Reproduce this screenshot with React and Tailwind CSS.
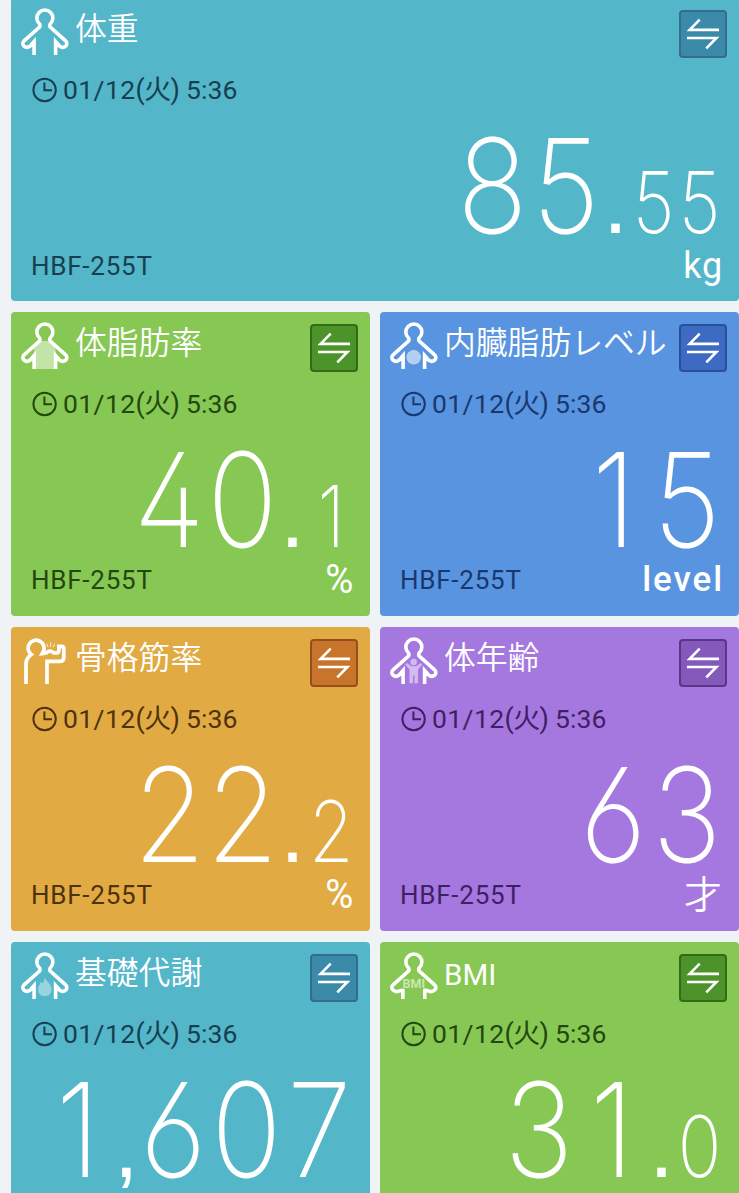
const themes = {
  teal: { card: "bg-[#54b6c9]", ink: "text-[#173f50]", button: "bg-[#3c8aaa] border-[#336c8c]" },
  green: { card: "bg-[#86c853]", ink: "text-[#24470f]", button: "bg-[#4c9429] border-[#346b18]" },
  blue: { card: "bg-[#5894df]", ink: "text-[#1a386f]", button: "bg-[#3d6bc4] border-[#29509a]" },
  orange: { card: "bg-[#e2aa42]", ink: "text-[#4d330d]", button: "bg-[#c8742b] border-[#964f1c]" },
  purple: { card: "bg-[#a578df]", ink: "text-[#3e2065]", button: "bg-[#8459bc] border-[#5b3486]" },
};

const cards = [
  { title: "体重", icon: "body", theme: "teal", whole: "85", decimal: "55", unit: "kg", wide: true },
  { title: "体脂肪率", icon: "fat", theme: "green", whole: "40", decimal: "1", unit: "%" },
  { title: "内臓脂肪レベル", icon: "visceral", theme: "blue", whole: "15", unit: "level" },
  { title: "骨格筋率", icon: "muscle", theme: "orange", whole: "22", decimal: "2", unit: "%" },
  { title: "体年齢", icon: "age", theme: "purple", whole: "63", unit: "才" },
  { title: "基礎代謝", icon: "flame", theme: "teal", whole: "1,607" },
  { title: "BMI", icon: "bmi", theme: "green", whole: "31", decimal: "0" },
];

const unitStyles = {
  kg: "text-[36px] font-[450] tracking-[0.8px] -mr-[1px]",
  level: "text-[35px] font-[480] tracking-[1.9px] -mr-[2px]",
  "%": "text-[40px] scale-x-[0.96] origin-right",
  才: "text-[38px] font-[350]",
};

function Inner({ kind }) {
  if (kind === "fat")
    return <path d="M19 19 L28.7 19 L34.5 25.5 L34.5 47 L13.2 47 L13.2 25.5 Z" fill="white" fillOpacity="0.5" />;
  if (kind === "visceral") return <circle cx="23.7" cy="35.3" r="7.3" fill="white" fillOpacity="0.55" />;
  if (kind === "age")
    return (
      <g fill="white" fillOpacity="0.5">
        <circle cx="23.7" cy="25" r="3.2" />
        <path d="M15.2 27.5 L16.8 26 L21.5 29.3 H26 L30.7 26 L32.2 27.5 L28 32.5 V46.3 H24.5 V38.5 H23 V46.3 H19.5 V32.5 Z" />
      </g>
    );
  if (kind === "flame")
    return (
      <path
        d="M23.8 25 C24.8 29.5 30.6 31.5 30.6 37.5 C30.6 41.5 27.8 44.2 23.8 44.2 C19.8 44.2 17 41.5 17 37.5 C17 34 19 33 19.3 30 L21.3 31.3 C22.8 30 23.4 28 23.8 25 Z"
        fill="white"
        fillOpacity="0.4"
      />
    );
  return null;
}

function PersonIcon({ kind }) {
  if (kind === "muscle")
    return (
      <svg viewBox="0 0 48 48" className="size-12 shrink-0" fill="none" stroke="white" strokeWidth="3.7">
        <path d="M5 47 V27 Q5 21.5 10.3 17.6 A8 8 0 1 1 22.4 14.4 L21.2 16.6 Q24 16.3 25.4 15.8 Q29 12.5 32.6 15.8 H35.6 Q37.9 15.8 37.9 13.5 V9.4 H40.4 Q42.8 9.4 42.8 12 V20.5 Q42.8 24.4 38.8 24.4 H26 V47" />
        <path d="M25.7 6.5 L27.1 10.3 M29.6 5.2 V9.8 M33.7 6.5 L32 10.3" strokeWidth="1" strokeOpacity="0.8" />
      </svg>
    );
  return (
    <svg viewBox="0 0 48 48" className="size-12 shrink-0 overflow-visible" fill="none">
      <Inner kind={kind} />
      <path
        d={
          kind === "bmi"
            ? "M12.9 47 V38 L9.2 39 C4.6 41.2 -0.6 36.3 3.1 32.8 L18.7 18.8 Q19.3 17.6 18.6 16 A8 8 0 1 1 29.1 16 Q28.4 17.6 29 18.8 L44.6 32.8 C48.3 36.3 43.1 41.2 38.5 39 L34.8 38 V47"
            : "M13.1 47 V33.5 L9.2 38 C4.6 41.6 -0.6 36.3 3.1 32.8 L18.7 18.8 Q19.3 17.6 18.6 16 A8 8 0 1 1 29.1 16 Q28.4 17.6 29 18.8 L44.6 32.8 C48.3 36.3 43.1 41.6 38.5 38 L34.6 33.5 V47"
        }
        stroke="white"
        strokeWidth="3.6"
      />
      {kind === "bmi" && (
        <text
          x="23.8"
          y="36"
          textAnchor="middle"
          fontSize="13"
          fontWeight="700"
          fill="#c9e7b1"
          stroke="#86c853"
          strokeWidth="1.4"
          paintOrder="stroke"
          textLength="22.5"
          lengthAdjust="spacingAndGlyphs"
          className="font-['Roboto',sans-serif]"
        >
          BMI
        </text>
      )}
    </svg>
  );
}

function SwapButton({ color }) {
  return (
    <button aria-label="swap" className={`size-12 shrink-0 rounded-[4px] border-2 ${color}`}>
      <svg viewBox="2 2 44 44" className="size-11" fill="none" stroke="white" strokeWidth="2.6">
        <path d="M20.7 9.7 L10.6 19.9 H40 M8 28 H37.4 L27.3 38.3" />
      </svg>
    </button>
  );
}

function Digits({ value }) {
  return [...value].map((c, i) =>
    c === "," ? (
      <span key={i} className="w-[23px] text-center font-['Liberation_Sans',sans-serif] text-[88px]">
        ,
      </span>
    ) : (
      <span key={i} className="flex w-[73px] justify-center">
        <span className="scale-x-[0.89] text-[131px] font-[200]">{c}</span>
      </span>
    )
  );
}

function Card({ title, icon, theme, whole, decimal, unit, wide }) {
  const t = themes[theme];
  return (
    <section className={`flex h-[303.67px] flex-col overflow-hidden rounded-[4px] ${t.card} ${wide ? "col-span-2" : ""}`}>
      <header className="flex h-[60px] pt-[10px] pr-3 pl-[10px]">
        <PersonIcon kind={icon} />
        <h2
          className={`ml-[6px] flex-1 whitespace-nowrap text-white ${
            icon === "bmi" ? "pt-[3px] text-[29.5px] leading-[40px] font-normal" : "pt-[1px] text-[31.8px] leading-[40px] font-[350]"
          }`}
        >
          {title}
        </h2>
        <div className="pt-[2px]">
          <SwapButton color={t.button} />
        </div>
      </header>
      <div className={`flex h-16 items-center pl-[21px] ${t.ink}`}>
        <svg viewBox="0 0 26 26" className="size-[26px]" fill="none" stroke="currentColor" strokeWidth="2">
          <circle cx="12.6" cy="13" r="11.2" />
          <path d="M12.4 5.5 V13.3 H20" />
        </svg>
        <time className="ml-[5px] text-[26.5px] leading-8 font-[450] tracking-[0.4px] whitespace-pre">
          01/12<span className="text-[27px] font-normal tracking-[-0.6px]">(火)</span>
          <span className="tracking-[0.1px]"> 5:36</span>
        </time>
      </div>
      <div
        className={`flex h-[120px] items-baseline justify-end pt-[4px] font-['Inter',sans-serif] leading-[120px] text-white [font-feature-settings:'cv02','cv03','cv04'] ${
          whole.includes(",") ? "pr-[14px]" : "pr-4"
        }`}
      >
        <Digits value={whole} />
        {decimal && (
          <>
            <span className="w-[29px] pr-[2px] text-center font-['Liberation_Sans',sans-serif] text-[88px]">.</span>
            {[...decimal].map((c, i) => (
              <span key={i} className="flex w-[46px] justify-center">
                <span className="scale-x-[0.85] text-[85px] font-[200]">{c}</span>
              </span>
            ))}
          </>
        )}
      </div>
      <footer className="flex items-center justify-between pt-[1px] pr-[17px] pl-5 leading-[46px]">
        <span className={`text-[26px] font-[450] tracking-[0.75px] ${t.ink}`}>HBF-255T</span>
        {unit && <span className={`text-white ${unitStyles[unit]}`}>{unit}</span>}
      </footer>
    </section>
  );
}

export default function App() {
  return (
    <main className="h-[1193px] overflow-hidden bg-[#eff3f6] pl-[11px] font-['Roboto','Noto_Sans_CJK_JP',sans-serif]">
      <div className="-mt-[2.3px] grid grid-cols-2 gap-x-[10px] gap-y-[11px]">
        {cards.map((c) => (
          <Card key={c.title} {...c} />
        ))}
      </div>
    </main>
  );
}
